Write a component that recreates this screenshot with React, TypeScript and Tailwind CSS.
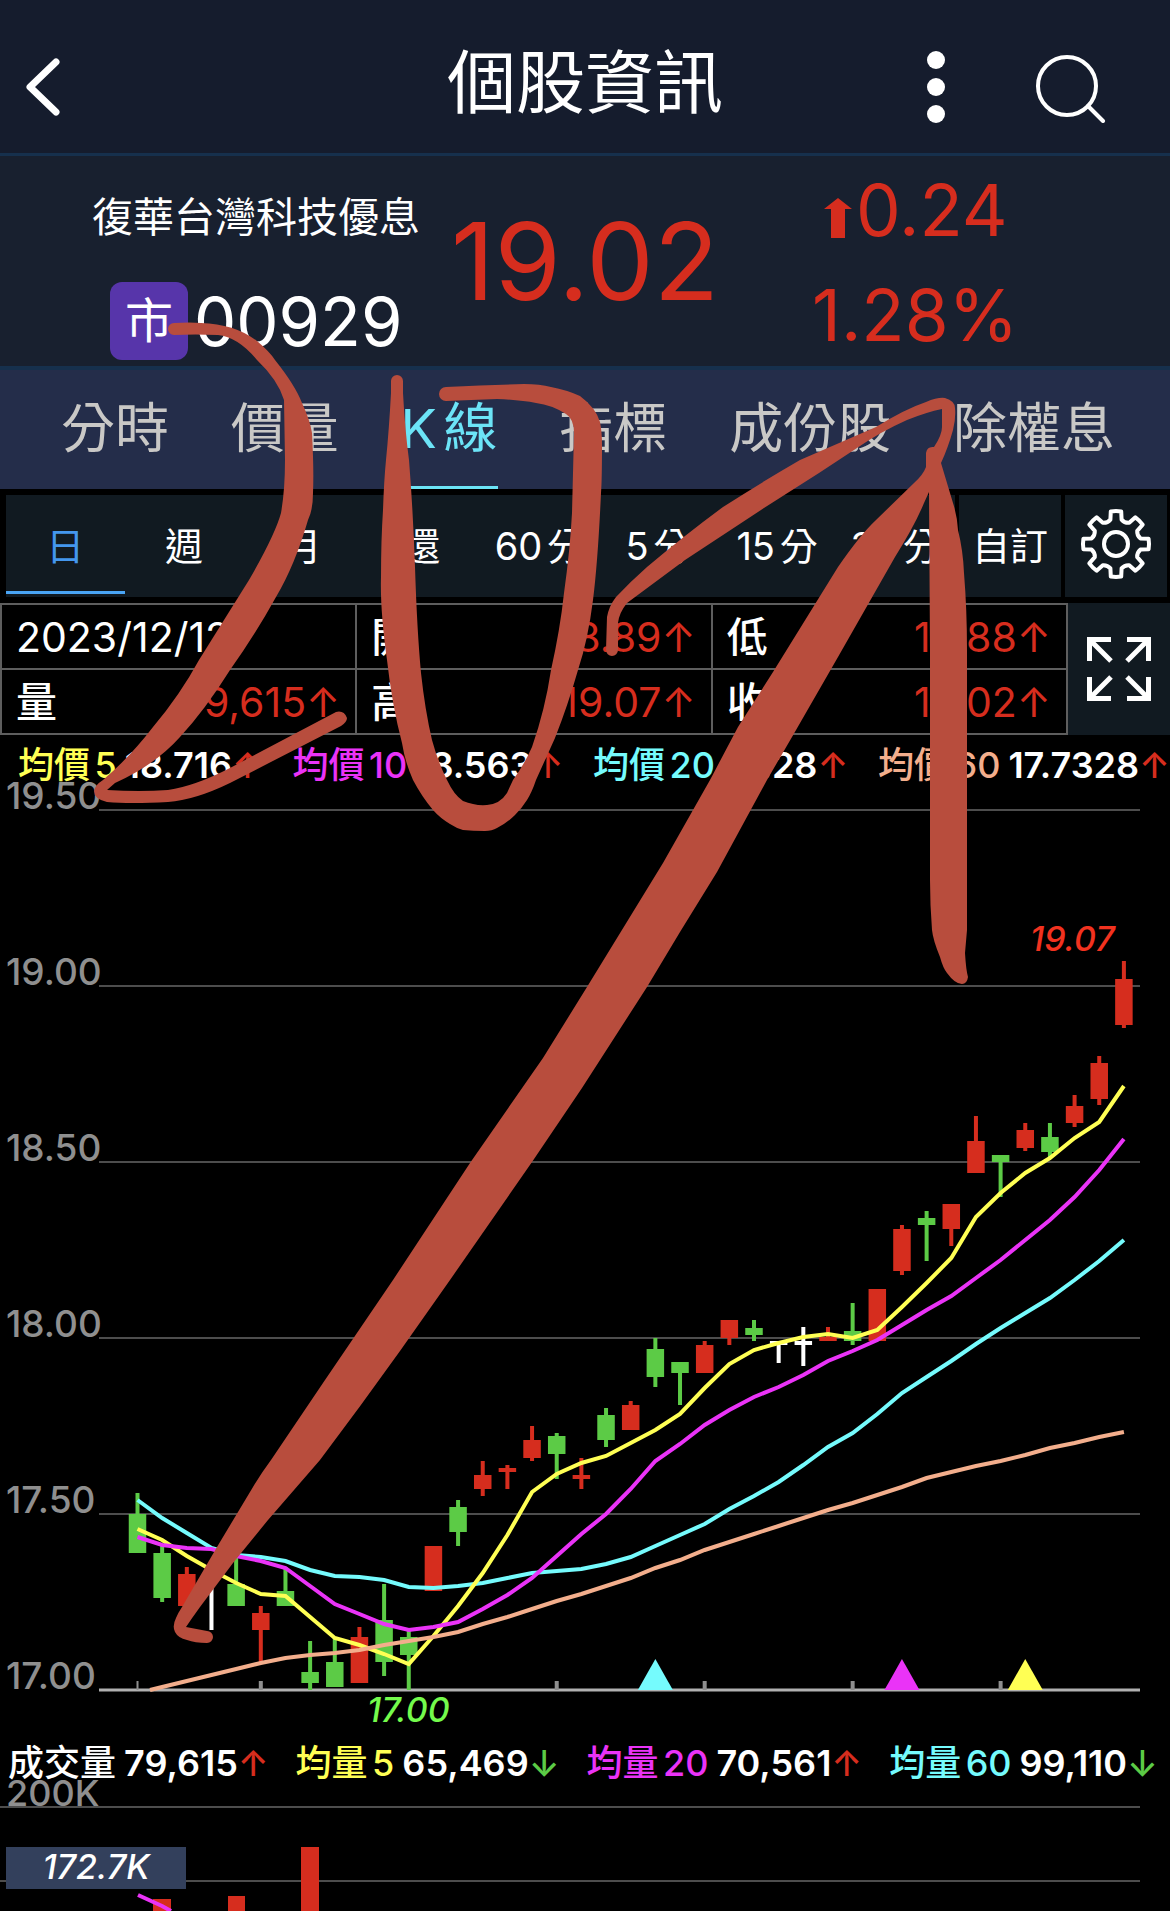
import React from "react";

const RED = "#d62d1e";
const GREEN = "#5ccb46";
const WHITE = "#ffffff";
const YELLOW = "#ffff54";
const MAGENTA = "#ea33f7";
const CYAN = "#75fbfd";
const SALMON = "#f3ae8c";
const GRID = "#4d4d4d";

const candleX = (i: number) => 137.5 + i * 24.66;

// [colour, high, low, body top, body bottom]
const candles: [string, number, number, number, number][] = [
  [GREEN, 1493, 1553, 1514, 1553],
  [GREEN, 1546, 1602, 1553, 1598],
  [RED, 1567, 1606, 1574, 1606],
  [WHITE, 1585, 1630, 1585, 1585],
  [GREEN, 1556, 1606, 1584, 1606],
  [RED, 1606, 1662, 1613, 1630],
  [GREEN, 1567, 1606, 1591, 1606],
  [GREEN, 1641, 1690, 1672, 1683],
  [GREEN, 1638, 1686, 1662, 1687],
  [RED, 1627, 1683, 1637, 1683],
  [GREEN, 1584, 1676, 1620, 1662],
  [GREEN, 1630, 1690, 1637, 1655],
  [RED, 1546, 1591, 1546, 1591],
  [GREEN, 1500, 1546, 1507, 1532],
  [RED, 1461, 1496, 1475, 1489],
  [RED, 1465, 1489, 1468, 1472],
  [RED, 1426, 1461, 1440, 1458],
  [GREEN, 1433, 1479, 1436, 1454],
  [RED, 1458, 1489, 1475, 1479],
  [GREEN, 1408, 1447, 1415, 1440],
  [RED, 1401, 1430, 1405, 1430],
  [GREEN, 1338, 1387, 1349, 1377],
  [GREEN, 1362, 1405, 1362, 1373],
  [RED, 1341, 1373, 1345, 1373],
  [RED, 1320, 1345, 1320, 1338],
  [GREEN, 1320, 1341, 1328, 1335],
  [WHITE, 1341, 1363, 1341, 1345],
  [WHITE, 1327, 1366, 1341, 1345],
  [RED, 1327, 1341, 1337, 1341],
  [GREEN, 1303, 1345, 1331, 1341],
  [RED, 1289, 1341, 1289, 1341],
  [RED, 1225, 1275, 1229, 1271],
  [GREEN, 1211, 1261, 1218, 1225],
  [RED, 1204, 1246, 1204, 1229],
  [RED, 1116, 1173, 1141, 1173],
  [GREEN, 1155, 1197, 1155, 1162],
  [RED, 1123, 1151, 1130, 1148],
  [GREEN, 1123, 1157, 1137, 1152],
  [RED, 1095, 1127, 1106, 1123],
  [RED, 1056, 1105, 1063, 1099],
  [RED, 961, 1028, 979, 1025],
];

const ma5 = [1529, 1540, 1556, 1570, 1583, 1594, 1596, 1617, 1638, 1645, 1654, 1664, 1636, 1606, 1573, 1535, 1492, 1474, 1463, 1456, 1443, 1430, 1414, 1388, 1364, 1350, 1343, 1337, 1334, 1338, 1330, 1307, 1283, 1258, 1217, 1193, 1173, 1158, 1138, 1122, 1086];
const ma10 = [1537, 1545, 1548, 1549, 1556, 1561, 1568, 1586, 1604, 1614, 1624, 1630, 1627, 1622, 1609, 1595, 1578, 1556, 1534, 1514, 1489, 1461, 1444, 1425, 1410, 1397, 1387, 1375, 1361, 1351, 1340, 1325, 1310, 1296, 1278, 1260, 1240, 1220, 1197, 1170, 1139];
const ma20 = [1500, 1518, 1533, 1548, 1555, 1557, 1561, 1570, 1576, 1577, 1580, 1587, 1588, 1586, 1583, 1578, 1573, 1571, 1569, 1564, 1557, 1546, 1535, 1524, 1509, 1496, 1482, 1465, 1447, 1433, 1414, 1393, 1377, 1361, 1344, 1328, 1313, 1298, 1280, 1261, 1240];
const ma60 = [1687, 1681, 1675, 1669, 1663, 1658, 1655, 1653, 1650, 1645, 1641, 1637, 1632, 1624, 1617, 1609, 1601, 1594, 1586, 1578, 1568, 1560, 1550, 1542, 1534, 1526, 1518, 1510, 1503, 1495, 1487, 1478, 1472, 1466, 1461, 1455, 1448, 1443, 1437, 1432];

const linePoints = (ys: number[], from = 0) =>
  ys.map((y, i) => `${candleX(i + from)},${y}`).join(" ");

const priceLevels = [
  { label: "19.50", y: 810 },
  { label: "19.00", y: 986 },
  { label: "18.50", y: 1162 },
  { label: "18.00", y: 1338 },
  { label: "17.50", y: 1514 },
  { label: "17.00", y: 1690 },
];

const gearPath = (() => {
  const pt = (r: number, deg: number) => {
    const a = (deg * Math.PI) / 180;
    return `${(36 + r * Math.sin(a)).toFixed(1)} ${(36 - r * Math.cos(a)).toFixed(1)}`;
  };
  let d = "";
  for (let k = 0; k < 8; k++) {
    const c = k * 45;
    d += `${k === 0 ? "M" : "L"}${pt(25, c - 13)}L${pt(33, c - 9)}A33 33 0 0 1 ${pt(33, c + 9)}L${pt(25, c + 13)}A9 9 0 0 0 ${pt(25, c + 32)}`;
  }
  return d + "Z";
})();

function Header() {
  return (
    <header className="grid h-[156px] grid-cols-[1fr_auto_1fr] items-center border-b-3 border-[#16304d] bg-[#151c2d]">
      <button aria-label="返回" className="w-fit pt-5 pl-6">
        <svg className="h-[60px] w-[38px]" viewBox="0 0 38 60" fill="none" stroke="#fff" strokeWidth="7" strokeLinecap="round" strokeLinejoin="round">
          <path d="M32 5 6 30l26 25" />
        </svg>
      </button>
      <h1 className="pt-[14px] text-[69px] leading-none">個股資訊</h1>
      <div className="flex items-center justify-end gap-[88px] pt-5 pr-16">
        <button aria-label="更多">
          <svg className="h-[76px] w-5" viewBox="0 0 20 76" fill="#fff">
            <circle cx="10" cy="11" r="9" />
            <circle cx="10" cy="38" r="9" />
            <circle cx="10" cy="65" r="9" />
          </svg>
        </button>
        <button aria-label="搜尋">
          <svg className="size-[72px]" viewBox="0 0 72 72" fill="none" stroke="#fff" strokeWidth="4" strokeLinecap="round">
            <circle cx="33" cy="35" r="29" />
            <path d="m54 55 15 15" />
          </svg>
        </button>
      </div>
    </header>
  );
}

function Quote() {
  return (
    <section className="grid h-[210px] grid-cols-[451px_1fr_440px] bg-[#18202f]">
      <div className="flex flex-col pt-9 pl-[92px]">
        <h2 className="text-[41px] leading-[50px] whitespace-nowrap">復華台灣科技優息</h2>
        <div className="mt-10 flex items-center gap-[6px] pl-[18px]">
          <span className="flex size-[78px] items-center justify-center rounded-xl bg-[#5735aa] text-[48px] leading-none">市</span>
          <span className="text-[67px] leading-none">00929</span>
        </div>
      </div>
      <div className="pt-[52px] text-[107px] leading-none text-[#d62d1e]">19.02</div>
      <div className="flex flex-col gap-[29px] pt-4 text-[71px] leading-[76px] text-[#d62d1e]">
        <div className="flex items-center pl-[94px]">
          <svg className="mt-4 mr-1 h-10 w-7" viewBox="0 0 28 40" fill={RED} aria-label="上漲">
            <path d="M14 0 28 11H21V40H7V11H0Z" />
          </svg>
          0.24
        </div>
        <div className="pl-[82px]">1.28%</div>
      </div>
    </section>
  );
}

function MainTabs() {
  const tabs = ["分時", "價量", "K線", "指標", "成份股", "除權息"];
  return (
    <nav className="flex h-[123px] justify-between border-t-4 border-[#16304d] bg-[#242d4a] pr-[55px] pl-[61px] text-[54px] text-[#c9c8c6]">
      {tabs.map((t) => (
        <button
          key={t}
          className={
            t === "K線"
              ? "border-b-3 border-[#6ce4f7] text-[#6ce4f7]"
              : "border-b-3 border-transparent"
          }
        >
          {t}
        </button>
      ))}
    </nav>
  );
}

function PeriodBar() {
  const periods = ["日", "週", "月", "還", "60分", "5分", "15分", "30分"];
  return (
    <div className="flex gap-1 bg-black px-[6px] py-[6px] pr-[3px] text-[38px]">
      <div className="grid h-[102px] flex-1 grid-cols-8 bg-[#111a21]">
        {periods.map((p) => (
          <button
            key={p}
            className={
              p === "日"
                ? "my-[3px] border-b-3 border-[#4aa5f5] pt-[3px] text-[#4497ee]"
                : "my-[3px] border-b-3 border-transparent pt-[3px] whitespace-nowrap"
            }
          >
            {p}
          </button>
        ))}
      </div>
      <button className="h-[102px] w-[102px] bg-[#111a21]">自訂</button>
      <button aria-label="設定" className="flex h-[102px] w-[102px] items-center justify-center bg-[#111a21] pb-1">
        <svg className="size-[72px]" viewBox="0 0 72 72" fill="none" stroke="#fff" strokeWidth="4" strokeLinejoin="round">
          <path d={gearPath} />
          <circle cx="36" cy="36" r="12" />
        </svg>
      </button>
    </div>
  );
}

const Cell = ({ label, value }: { label: string; value?: string }) => (
  <td className="h-[65px] border-2 border-[#5e5e5e] p-0 pr-[15px] pl-[14px]">
    <div className="flex items-center justify-between">
      <span className={value ? "font-medium" : ""}>{label}</span>
      {value && <span className="text-[#d62d1e]">{value}</span>}
    </div>
  </td>
);

function DayInfo() {
  return (
    <div className="flex bg-[#111a21] text-[41px] leading-[50px]">
      <div className="flex-1 bg-black">
        <table className="w-full table-fixed border-collapse">
          <tbody>
            <tr>
              <Cell label="2023/12/12" />
              <Cell label="開" value="18.89↑" />
              <Cell label="低" value="18.88↑" />
            </tr>
            <tr>
              <Cell label="量" value="79,615↑" />
              <Cell label="高" value="19.07↑" />
              <Cell label="收" value="19.02↑" />
            </tr>
          </tbody>
        </table>
      </div>
      <button aria-label="全螢幕" className="flex w-[102px] items-center justify-center">
        <svg className="size-[66px]" viewBox="0 0 66 66" fill="none" stroke="#fff" strokeWidth="5">
          <path d="M3.500 25V3.500H25M5 5l20 20M41 3.500h21.500V25M61 5 41 25M3.500 41v21.500H25M5 61l20-20M41 62.500h21.500V41M61 61 41 41" />
        </svg>
      </button>
    </div>
  );
}

type LegendItem = { name: string; color: string; value: string; up: boolean };

const LegendEntry = ({ name, color, value, up }: LegendItem) => (
  <span className="flex items-baseline gap-2">
    <span style={{ color }}>{name}</span>
    <span className="font-semibold">
      {value}
      <span className={up ? "font-medium text-[#d62d1e]" : "font-medium text-[#5ccb46]"}>{up ? "↑" : "↓"}</span>
    </span>
  </span>
);

const priceLegend: LegendItem[] = [
  { name: "均價5", color: YELLOW, value: "18.716", up: true },
  { name: "均價10", color: MAGENTA, value: "18.563", up: true },
  { name: "均價20", color: CYAN, value: "18.28", up: true },
  { name: "均價60", color: SALMON, value: "17.7328", up: true },
];

const volumeLegend: LegendItem[] = [
  { name: "成交量", color: WHITE, value: "79,615", up: true },
  { name: "均量5", color: YELLOW, value: "65,469", up: false },
  { name: "均量20", color: MAGENTA, value: "70,561", up: true },
  { name: "均量60", color: CYAN, value: "99,110", up: false },
];

function PriceChart() {
  return (
    <svg className="block h-auto w-full overflow-visible" viewBox="0 783 1170 957" fontFamily="Inter" fontWeight="500">
      {priceLevels.map(({ label, y }) => (
        <g key={label}>
          <line x1="99" x2="1140" y1={y} y2={y} stroke={label === "17.00" ? "#b0b0b0" : GRID} strokeWidth={label === "17.00" ? 3 : 2} />
          <text x="6" y={y - 1} fontSize="37" fill="#8f8f8f">{label}</text>
        </g>
      ))}
      {[0, 5, 17, 23, 29, 35].map((i) => (
        <rect key={i} x={candleX(i) - (i ? 2 : 1)} y="1681" width={i ? 4 : 2} height="9" fill="#8f8f8f" />
      ))}
      {candles.map(([color, high, low, top, bottom], i) => (
        <g key={i} fill={color}>
          <rect x={candleX(i) - 2} y={high} width={4} height={low - high} />
          <rect x={candleX(i) - 8.75} y={top} width={17.5} height={bottom - top} />
        </g>
      ))}
      <g fill="none" strokeWidth="4">
        <polyline points={linePoints(ma20)} stroke={CYAN} />
        <polyline points={linePoints(ma5)} stroke={YELLOW} />
        <polyline points={linePoints(ma10)} stroke={MAGENTA} />
        <polyline points={`150,1690 ${linePoints(ma60, 1)}`} stroke={SALMON} />
      </g>
      {[
        [21, CYAN],
        [31, MAGENTA],
        [36, YELLOW],
      ].map(([i, color]) => {
        const x = candleX(i as number);
        return <path key={color} d={`M${x} 1659L${x + 17.5} 1690H${x - 17.5}Z`} fill={color as string} />;
      })}
      <g fontSize="34" fontStyle="italic">
        <text x="1030" y="951" fill="#f2321f">19.07</text>
        <text x="367" y="1722" fill="#74fb4c">17.00</text>
      </g>
    </svg>
  );
}

function VolumeChart() {
  return (
    <svg className="block h-auto w-full overflow-visible" viewBox="0 1780 1170 131" fontFamily="Inter" fontWeight="500">
      <line x1="0" x2="1140" y1="1807" y2="1807" stroke={GRID} strokeWidth="2" />
      <line x1="0" x2="1140" y1="1881" y2="1881" stroke={GRID} strokeWidth="2" />
      <text x="6" y="1806" fontSize="36" fill="#8f8f8f">200K</text>
      <g fill={RED}>
        <rect x="153" y="1899" width="18" height="12" />
        <rect x="228" y="1896" width="17" height="15" />
        <rect x="301" y="1847" width="18" height="64" />
      </g>
      <polyline points="138,1895 162,1906 171,1911" fill="none" stroke={MAGENTA} strokeWidth="4" />
      <rect x="6" y="1847" width="180" height="42" fill="#33405c" />
      <text x="96" y="1879" fontSize="34" fontStyle="italic" fill="#fff" textAnchor="middle">172.7K</text>
    </svg>
  );
}

function Scribbles() {
  return (
    <svg className="pointer-events-none absolute inset-x-0 top-0 h-auto w-full" viewBox="0 0 1170 1911" fill="#b84d3d" aria-hidden="true">
      <path d="M174 323Q190 322 201 323Q235 324 257 341Q270 352 275 360Q295 385 302 403Q310 420 312 433Q314 470 313 493Q313 510 308 520Q295 565 276 597Q255 635 230 670Q205 710 180 737Q155 765 115 783L107 790Q140 792 168 790Q195 786 230 768L336 712Q344 710 347 718Q347 722 341 726L230 783Q195 800 168 802Q130 804 107 802Q94 799 94 791Q95 785 103 780Q130 757 153 727Q180 695 199 660L249 580Q275 535 281 513Q285 490 285 460L284 400Q278 380 257 360Q238 337 218 335Q195 334 174 335A6 6 0 0 1 174 323Z" />
      <path d="M391 381A6 6 0 0 1 403 381L403 393Q405 430 409 460Q413 510 415 567Q417 630 421 673Q425 710 432 740Q438 762 447 780Q454 795 463 801Q475 806 487 805Q500 804 507 793L513 780Q524 765 532 747Q545 710 551 670Q560 630 564 593Q570 550 572 513L574 433Q574 419 566 414Q552 405 536 403Q520 400 497 399L446 401A7 7 0 0 1 446 387Q490 385 524 384Q540 384 551 387Q567 390 580 396Q596 408 600 422Q602 432 602 445Q602 480 601 493Q598 560 593 600Q588 640 578 670Q568 705 555 738L536 780Q532 792 527 800Q522 808 515 815Q507 823 497 828Q492 831 485 831Q473 831 463 830Q456 828 450 824Q440 818 433 810Q422 797 413 780Q405 762 402 743Q392 705 387 660Q380 610 381 577Q381 540 383 510Q384 480 386 460Q389 430 391 393Z" />
      <path d="M606 650L607 617Q609 606 616 597Q630 582 647 567Q685 535 723 507Q762 482 800 460L876 427Q905 409 926 402Q938 397 945 398Q955 401 955 408Q956 418 953 430Q948 448 941 463L953 503Q957 515 958 530Q963 550 964 573Q967 610 967 650V930L965 953Q966 970 968 977Q967 984 962 984Q955 984 947 973Q943 968 940 957Q933 940 932 930Q930 905 930 880V650L929 492L924 503Q915 525 895 557L838 657L792 737L767 780L717 872L680 932L647 987L582 1088L532 1162L450 1280L400 1351Q360 1407 320 1460L268 1520L233 1563L200 1607Q192 1618 186 1627L207 1631A6 6 0 0 1 207 1643Q195 1643 187 1640Q178 1638 175 1632Q172 1626 176 1618Q178 1613 182 1607L217 1547L253 1487Q262 1472 271 1460L325 1380L393 1280L470 1163L543 1058L587 987L663 863L693 810L710 780L738 727L773 672L838 567Q860 535 876 520L914 483Q923 475 926 467V453Q927 446 934 447Q942 435 942 427V409Q927 412 907 420Q880 432 857 448L819 473L761 510L685 560L627 603Q619 613 618 623V650A6 6 0 0 1 606 650Z" />
    </svg>
  );
}

export default function App() {
  return (
    <div
      lang="zh-Hant"
      className="relative min-h-screen overflow-hidden bg-black font-['Inter','Noto_Sans_CJK_TC',sans-serif] text-white [text-autospace:normal]"
    >
      <Header />
      <main>
        <Quote />
        <MainTabs />
        <PeriodBar />
        <DayInfo />
        <div className="flex h-12 items-center justify-between pt-3 pl-[18px] text-[36px] leading-none font-medium whitespace-nowrap">
          {priceLegend.map((item) => (
            <LegendEntry key={item.name} {...item} />
          ))}
        </div>
        <PriceChart />
        <div className="flex h-10 items-center justify-between pt-[6px] pr-3 pl-2 text-[36px] leading-none font-medium whitespace-nowrap">
          {volumeLegend.map((item) => (
            <LegendEntry key={item.name} {...item} />
          ))}
        </div>
        <VolumeChart />
      </main>
      <Scribbles />
    </div>
  );
}
